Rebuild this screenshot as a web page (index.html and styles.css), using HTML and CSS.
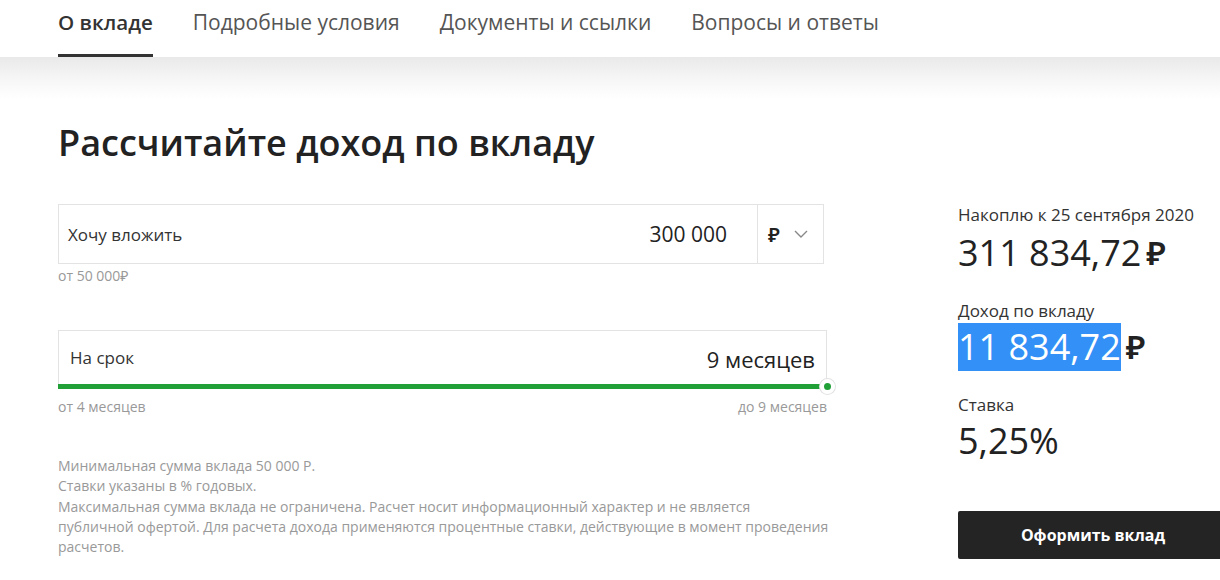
FILE: index.html
```html
<!DOCTYPE html>
<html lang="ru">
<head>
<meta charset="utf-8">
<link rel="stylesheet" href="styles.css">
</head>
<body>
<nav class="tabs">
  <a class="tab active">О вкладе</a>
  <a class="tab">Подробные условия</a>
  <a class="tab">Документы и ссылки</a>
  <a class="tab">Вопросы и ответы</a>
</nav>
<main class="page">
  <h1 class="title">Рассчитайте доход по вкладу</h1>
  <div class="calc">
    <div class="form">
      <div class="field">
        <div class="field-box">
          <span class="field-label">Хочу вложить</span>
          <span class="field-value">300 000</span>
          <span class="currency">₽
            <svg class="chev" width="14" height="8" viewBox="0 0 14 8"><path d="M1 1l6 6 6-6" fill="none" stroke="#888" stroke-width="1.4"/></svg>
          </span>
        </div>
        <div class="hint">от 50 000₽</div>
      </div>
      <div class="field term">
        <div class="field-box term-box">
          <span class="field-label">На срок</span>
          <span class="field-value">9 месяцев</span>
          <div class="slider"><span class="knob"></span></div>
        </div>
        <div class="hint range"><span>от 4 месяцев</span><span>до 9 месяцев</span></div>
      </div>
      <div class="note">
        <p>Минимальная сумма вклада 50 000 Р.</p>
        <p>Ставки указаны в % годовых.</p>
        <p>Максимальная сумма вклада не ограничена. Расчет носит информационный характер и не является<br>публичной офертой. Для расчета дохода применяются процентные ставки, действующие в момент проведения расчетов.</p>
      </div>
    </div>
    <aside class="result">
      <div class="res-label">Накоплю к 25 сентября 2020</div>
      <div class="res-value first">311 834,72<span class="rub">₽</span></div>
      <div class="res-label second">Доход по вкладу</div>
      <div class="res-value"><span class="sel">11 834,72</span><span class="rub">₽</span></div>
      <div class="res-label second">Ставка</div>
      <div class="res-value">5,25%</div>
      <button class="cta">Оформить вклад</button>
    </aside>
  </div>
</main>
</body>
</html>
```

FILE: styles.css
```css
html, body {
  margin: 0;
  padding: 0;
  overflow: hidden;
  background: #fff;
}
body {
  font-family: "Open Sans", "Noto Sans", sans-serif;
  color: #222;
  width: 1220px;
  height: 580px;
}
.tabs {
  display: flex;
  gap: 40px;
  padding: 0 0 0 58px;
  height: 57px;
  box-sizing: border-box;
  background: #fff;
}
.tab {
  font-size: 21px;
  color: #555;
  line-height: 26px;
  padding-top: 9px;
  height: 57px;
  box-sizing: border-box;
  border-bottom: 3px solid transparent;
}
.tab.active {
  color: #333;
  font-weight: 600;
  font-size: 20.6px;
  border-bottom-color: #333;
}
.page {
  background: linear-gradient(#e9e9e9 0, #f6f6f6 22px, #fff 42px);
  padding: 62px 0 0 58px;
  height: 523px;
  box-sizing: border-box;
}
.title {
  margin: 0;
  font-size: 36px;
  font-weight: 600;
  line-height: 48px;
  color: #222;
}
.calc {
  display: flex;
  margin-top: 37px;
}
.form {
  width: 769px;
}
.field-box {
  display: flex;
  align-items: center;
  height: 60px;
  border: 1px solid #e3e3e3;
  box-sizing: border-box;
  width: 766px;
}
.field-label {
  font-size: 17px;
  color: #333;
  padding-left: 9px;
  flex: 1;
}
.field-value {
  font-size: 21px;
  color: #222;
  padding-right: 30px;
}
.currency {
  display: flex;
  align-items: center;
  gap: 14px;
  height: 100%;
  border-left: 1px solid #e3e3e3;
  padding-left: 10px;
  width: 66px;
  box-sizing: border-box;
  font-size: 20px;
  font-weight: 600;
}
.hint {
  font-size: 14px;
  color: #999;
  margin-top: 3px;
  line-height: 18px;
}
.term {
  margin-top: 45px;
}
.term-box {
  width: 769px;
  height: 59px;
  position: relative;
  border-bottom: none;
  align-items: flex-start;
  padding-top: 15px;
}
.term-box .field-label { padding-left: 11px; line-height: 24px; }
.term-box .field-value { padding-right: 11px; font-size: 22px; font-weight: 500; line-height: 26px; }
.slider {
  position: absolute;
  left: -1px;
  right: -1px;
  bottom: 0;
  height: 5px;
  background: #21a038;
}
.knob {
  position: absolute;
  right: -8px;
  top: -5px;
  width: 7px;
  height: 7px;
  border: 4px solid #fff;
  border-radius: 50%;
  background: #21a038;
  box-shadow: 0 0 0 1px #e2e2e2;
}
.range {
  display: flex;
  justify-content: space-between;
  margin-top: 9px;
  font-size: 14px;
}
.note {
  margin-top: 40px;
  font-size: 14px;
  line-height: 20.3px;
  color: #999;
  width: 800px;
}
.note p { margin: 0; }
.result {
  margin-left: 131px;
  width: 270px;
  flex: none;
}
.res-label {
  font-size: 17px;
  color: #333;
  line-height: 22px;
}
.res-value {
  font-size: 36px;
  font-weight: 500;
  line-height: 48px;
  height: 48px;
  margin-top: 1px;
  color: #222;
  display: flex;
  align-items: center;
}
.res-value.first { margin-top: 3px; }
.res-value .rub { font-weight: 600; margin-left: 5px; font-size: 33px; }
.sel {
  background: #3390f6;
  color: #fff;
  display: inline-block;
  height: 48px;
}
.res-label.second { margin-top: 23px; }
.cta {
  margin-top: 46px;
  width: 270px;
  height: 48px;
  border: 0;
  border-radius: 2px;
  background: #242424;
  color: #fff;
  font-family: inherit;
  font-size: 16px;
  font-weight: 700;
}
```
